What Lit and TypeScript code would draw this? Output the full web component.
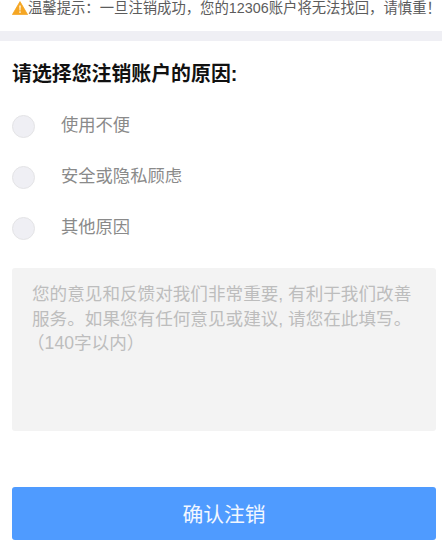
import { LitElement, html, css } from "lit";
import { customElement } from "lit/decorators.js";

@customElement("app-root")
export class AppRoot extends LitElement {
  static styles = css`
    :host {
      display: block;
      width: 442px;
      height: 555px;
      background: #fff;
      overflow: hidden;
      font-family: "Liberation Sans", "Noto Sans CJK SC", sans-serif;
    }
    .tip {
      height: 31px;
      box-sizing: border-box;
      padding: 0 0 0 12px;
      display: flex;
      align-items: flex-start;
      font-size: 14.35px;
      line-height: 16px;
      color: #5c5c5c;
      white-space: nowrap;
    }
    .tip svg {
      width: 16px;
      height: 14px;
      flex: none;
      margin-top: 1px;
    }
    .band {
      height: 10px;
      background: #efeff4;
    }
    .content {
      padding: 0 6px 0 12px;
    }
    h2 {
      margin: 0;
      padding: 20px 0 0;
      font-size: 19.9px;
      line-height: 27px;
      font-weight: 700;
      color: #111;
    }
    .opts {
      margin-top: 26px;
      display: flex;
      flex-direction: column;
      gap: 27.25px;
    }
    .opt {
      display: flex;
      align-items: center;
      height: 24px;
      gap: 26px;
      font-size: 17.3px;
      color: #8a8a8a;
    }
    .opt-label {
      padding-bottom: 6px;
    }
    .radio {
      width: 23px;
      height: 23px;
      box-sizing: border-box;
      border-radius: 50%;
      background: #efeff4;
      border: 1px solid #e4e4e6;
      flex: none;
    }
    .area {
      margin-top: 27.5px;
      height: 163px;
      box-sizing: border-box;
      padding: 14px 20px 0;
      background: #f3f3f3;
      border-radius: 3px;
      font-size: 17.6px;
      line-height: 24.5px;
      color: #bdbdbd;
      white-space: nowrap;
    }
    .lead {
      margin-left: -5px;
    }
    .btn {
      margin-top: 56px;
      height: 53px;
      box-sizing: border-box;
      padding-bottom: 2px;
      display: flex;
      align-items: center;
      justify-content: center;
      background: #4f9bff;
      border-radius: 3px;
      color: #f2f7ff;
      font-size: 20.8px;
    }
  `;

  render() {
    return html`
      <div class="tip">
        <svg viewBox="0 0 16 14" aria-hidden="true">
          <path d="M8 .6 15.6 13.6H.4Z" fill="#f5a623" stroke="#f5a623" stroke-width=".8" stroke-linejoin="round" />
          <path d="M7.3 4.6h1.4l-.25 5h-.9Z" fill="#fff" />
          <rect x="7.3" y="10.4" width="1.4" height="1.4" fill="#fff" />
        </svg>
        <span>温馨提示：一旦注销成功，您的12306账户将无法找回，请慎重！</span>
      </div>
      <div class="band"></div>
      <div class="content">
        <h2>请选择您注销账户的原因:</h2>
        <div class="opts">
          ${["使用不便", "安全或隐私顾虑", "其他原因"].map(
            (t) => html`<div class="opt"><span class="radio"></span><span class="opt-label">${t}</span></div>`
          )}
        </div>
        <div class="area">
          您的意见和反馈对我们非常重要, 有利于我们改善<br />服务。如果您有任何意见或建议, 请您在此填写。<br /><span class="lead">（140字以内）</span>
        </div>
        <div class="btn">确认注销</div>
      </div>
    `;
  }
}
